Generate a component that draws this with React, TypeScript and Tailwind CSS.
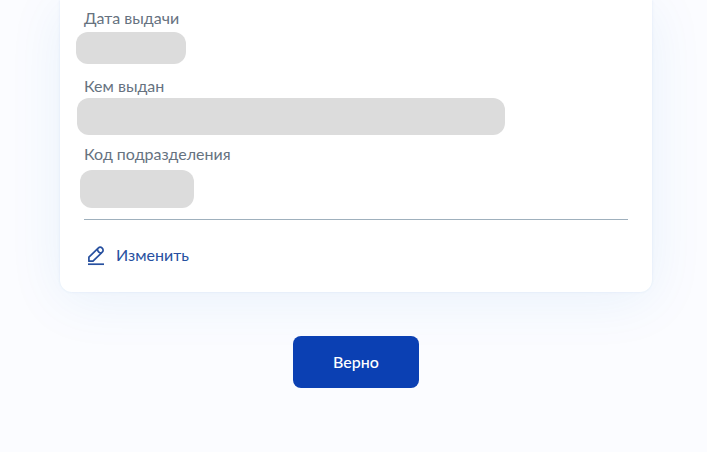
const fields = [
  { label: "Дата выдачи", value: "-ml-2 mt-0.5 h-8 max-w-[110px]" },
  { label: "Кем выдан", value: "-ml-[7px] h-[37px] max-w-[428px]" },
  { label: "Код подразделения", value: "-ml-1 mt-1 h-[38px] max-w-[114px]" },
];

function EditIcon() {
  return (
    <svg
      width="24"
      height="24"
      viewBox="0 0 24 24"
      fill="none"
      stroke="currentColor"
      strokeWidth="1.7"
      strokeLinejoin="round"
      aria-hidden="true"
    >
      <path d="M4.9 14.2 14.2 5.2c1.2-1.2 2.8-1.2 4 0s1.2 2.8 0 4L9 18.2H4.9Z" />
      <path d="M13.4 6c.2 2.3 1.7 3.9 4 4" />
      <path d="M4 21.2h16" />
    </svg>
  );
}

export default function App() {
  return (
    <main className="min-h-screen overflow-hidden bg-[#fbfcff] pr-[55px] pl-[60px] font-['Lato','Open_Sans',sans-serif] text-base leading-6">
      <section className="rounded-b-xl bg-white px-6 pt-1.5 pb-[25px] shadow-[0_0_3px_rgba(30,110,200,0.10),0_8px_56px_rgba(30,110,210,0.08)]">
        <dl className="border-b border-[#9fb0bd] pb-[9px]">
          {fields.map((field) => (
            <div key={field.label} className="h-17">
              <dt className="text-[#66727f]">{field.label}</dt>
              <dd className={`rounded-xl bg-[#dcdcdc] ${field.value}`} />
            </div>
          ))}
        </dl>
        <button type="button" className="mt-[23px] flex items-center gap-2 text-[#27509f]">
          <EditIcon />
          <span>Изменить</span>
        </button>
      </section>
      <div className="mt-11 flex justify-center">
        <button
          type="button"
          className="rounded-lg bg-[#0b40b3] px-10 py-3.5 font-medium text-white"
        >
          Верно
        </button>
      </div>
    </main>
  );
}
